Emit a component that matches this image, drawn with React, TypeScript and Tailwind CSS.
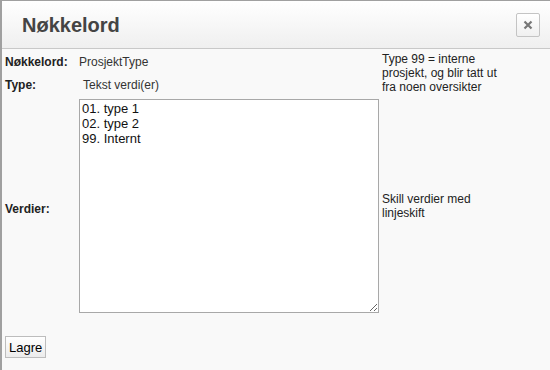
export default function App() {
  return (
    <div className="w-[550px] h-[370px] overflow-hidden bg-[#f9f9f9] border-t border-l-2 border-[#a0a0a0] text-[#333] font-['Liberation_Sans',Arial,sans-serif] text-[12px]">
      <div className="h-[48px] flex items-center justify-between pl-[20px] pr-[10px] bg-gradient-to-b from-white to-[#efefef] border-b border-[#c8c8c8]">
        <h1 className="text-[20px] font-bold text-[#444] leading-none">Nøkkelord</h1>
        <button className="w-[24px] h-[24px] mt-[1px] flex items-center justify-center border border-[#c4c4c4] rounded-[2px] bg-gradient-to-b from-white to-[#f0f0f0]">
          <svg width="10" height="10" viewBox="0 0 10 10">
            <path d="M1.5 1.5 L8.5 8.5 M8.5 1.5 L1.5 8.5" stroke="#777" strokeWidth="2.2" />
          </svg>
        </button>
      </div>
      <div className="grid grid-cols-[74px_303px_1fr] pl-[3px] pt-[3px] leading-[14px]">
        <div className="font-bold text-[#222] h-[19px] flex items-center">Nøkkelord:</div>
        <div className="h-[19px] flex items-center">ProsjektType</div>
        <div className="row-span-2 text-[#222] w-[125px]">
          Type 99 = interne prosjekt, og blir tatt ut fra noen oversikter
        </div>
        <div className="font-bold text-[#222] h-[27px] flex items-center">Type:</div>
        <div className="h-[27px] flex items-center pl-[4px]">Tekst verdi(er)</div>
        <div className="font-bold text-[#222] flex items-center pt-[6px]">Verdier:</div>
        <div className="py-[1px]">
          <textarea
            className="block w-[300px] h-[214px] bg-white border border-[#a8a8a8] px-[2px] py-[1px] text-[13px] leading-[15px] text-[#111] font-['Liberation_Sans',Arial,sans-serif] resize"
            defaultValue={"01. type 1\n02. type 2\n99. Internt"}
          />
        </div>
        <div className="flex items-center text-[#222] w-[125px]">Skill verdier med linjeskift</div>
      </div>
      <div className="pl-[3px] pt-[22px]">
        <button className="h-[22px] px-[3px] border border-[#bdbdbd] bg-gradient-to-b from-white to-[#ececec] text-[13px] text-black leading-none">
          Lagre
        </button>
      </div>
    </div>
  );
}
